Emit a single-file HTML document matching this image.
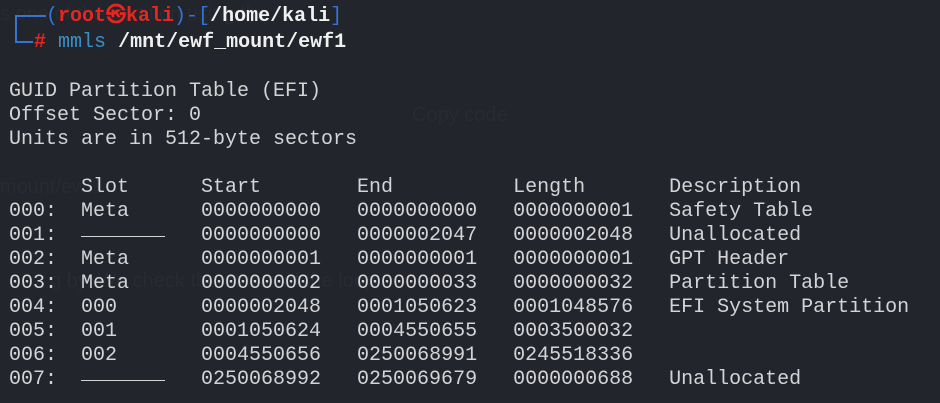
<!DOCTYPE html>
<html><head><meta charset="utf-8"><style>
html,body{margin:0;padding:0;}
body{width:940px;height:403px;background:#22252c;overflow:hidden;position:relative;font-family:"Liberation Mono","DejaVu Sans Mono",monospace;font-size:20px;color:#d4d4d6;}
pre{margin:0;font:inherit;white-space:pre;position:absolute;left:9px;line-height:24px;}
.b{color:#3574d4}.r{color:#e8251f;font-weight:bold}.w{color:#f0f0f0;font-weight:bold}.c{color:#3b8fc9}
.dash{display:inline-block;width:84px;height:12px;border-bottom:1.5px solid #d4d4d6;vertical-align:top;}
.ghost{position:absolute;color:#282b32;font-family:"Liberation Sans",sans-serif;font-size:20px;}
</style></head><body>
<div class="ghost" style="left:0;top:3px">s one of the partition using the</div>
<div class="ghost" style="left:412px;top:104px">Copy code</div>
<div class="ghost" style="left:0;top:176px">mount/ewf1</div>
<div class="ghost" style="left:50px;top:270px">g by. We check the status of the loop</div>
<div style="position:absolute;left:15px;top:15px;width:31px;height:2px;background:#3574d4"></div>
<div style="position:absolute;left:15px;top:15px;width:2px;height:28px;background:#3574d4"></div>
<div style="position:absolute;left:15px;top:41px;width:18px;height:2px;background:#3574d4"></div>
<pre style="top:5px;left:10px">   <span class="b">(</span><span class="r">root㉿kali</span><span class="b">)-[</span><span class="w">/home/kali</span><span class="b">]</span></pre>
<pre style="top:31px;left:10px">  <span class="r">#</span> <span class="c">mmls</span> <span class="w">/mnt/ewf_mount/ewf1</span></pre>
<pre style="top:80px">GUID Partition Table (EFI)
Offset Sector: 0
Units are in 512-byte sectors

      Slot      Start        End          Length       Description
000:  Meta      0000000000   0000000000   0000000001   Safety Table
001:  <span class="dash"></span>   0000000000   0000002047   0000002048   Unallocated
002:  Meta      0000000001   0000000001   0000000001   GPT Header
003:  Meta      0000000002   0000000033   0000000032   Partition Table
004:  000       0000002048   0001050623   0001048576   EFI System Partition
005:  001       0001050624   0004550655   0003500032
006:  002       0004550656   0250068991   0245518336
007:  <span class="dash"></span>   0250068992   0250069679   0000000688   Unallocated</pre>
</body></html>
